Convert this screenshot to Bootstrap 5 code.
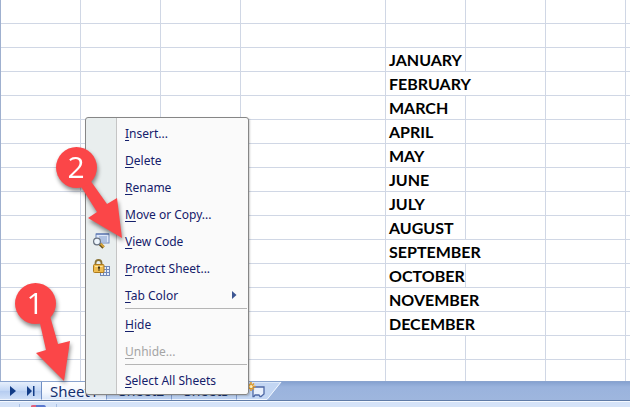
<!DOCTYPE html>
<html lang="en">
<head>
<meta charset="utf-8">
<meta name="viewport" content="width=device-width, initial-scale=1">
<title>Sheet tab menu</title>
<link rel="stylesheet" href="https://cdn.jsdelivr.net/npm/bootstrap@5.3.0/dist/css/bootstrap.min.css">
<style>
  body { background: #fff; font-family: "Noto Sans", sans-serif; }
  .sheet-area { min-height: 0; }
  .cells { table-layout: fixed; width: 100%; border-collapse: separate; border-spacing: 0; border-left: 1px solid #9fb0cf; font: 700 16px/22px Lato, sans-serif; color: #000; }
  .cells td { height: 24px; padding: 1px 0 0 3px; border-right: 1px solid #d0d7e5; border-bottom: 1px solid #d0d7e5; white-space: nowrap; }
  .cells td:last-child { border-right: 0; }
  .cells .w-std { width: 80px; }
  .cells .w-wide { width: 145px; }
  .tab-strip { height: 20px; background: linear-gradient(#86a2d0, #9ab3dd 5px, #9eb6de); border-top: 1px solid #8aa4cf; border-bottom: 1px solid #5f7ba6; }
  .nav-box { width: 42px; padding-left: 4px; background: linear-gradient(#e6effc, #c3d7f5 50%, #b4cbf0 51%, #cfdff7); border-right: 1px solid #6f8fc4; border-bottom: 1px solid #f0f5fd; }
  .nav-box button { width: 18px; }
  .sheet-tab { height: 18px; padding-left: 12px; width: 65px; text-align: left; font-size: 14px; line-height: 18px; color: #15306f; background: linear-gradient(#dce8fa, #b9cff0); border-right: 1px solid #7f9acb !important; border-bottom: 1px solid #f0f5fd !important; }
  .sheet-tab.current { padding-left: 8px; font-size: 15px; background: linear-gradient(#fff, #f4f8fe 60%, #dbe7f9); }
  .status-row { height: 6px; padding-left: 19px; background: #d5e3f8; border-top: 1px solid #f5f9ff; }
  .status-row .cell-box { width: 38px; border: 1px solid #a9c0e4; border-width: 0 1px; margin-top: 2px; }
  .ctx { left: 85px; top: 117px; width: 164px; padding: 1px 0; background: linear-gradient(90deg, #e9eeee 30px, #c5c5c5 30px, #c5c5c5 31px, #fafafa 31px); border: 1px solid #868686; border-radius: 3px; box-shadow: 1px 1px 2px #0003; }
  .ctx button { height: 27px; font-size: 12px; line-height: 24px; color: #15206b; }
  .ctx .label { padding-top: 2px; }
  .ctx button:disabled { color: #a5a5a5; }
  .ctx u { text-underline-offset: 2px; }
  .ctx .slot { width: 39px; padding-left: 7px; }
  .ctx hr { margin: 0 1px 1px 39px; border-top: 1px solid #b5b5b5; opacity: 1; }
  .callout { filter: drop-shadow(1px 3px 2px #0007); pointer-events: none; overflow: visible; }
  .callout text { font: 30px "Open Sans", sans-serif; fill: #fff; }
  .one { left: 15px; top: 283px; }
  .two { left: 56px; top: 147px; }
</style>
<script src="https://cdn.jsdelivr.net/npm/bootstrap@5.3.0/dist/js/bootstrap.bundle.min.js"></script>
</head>
<body>
<div class="vh-100 d-flex flex-column position-relative overflow-hidden">
  <main class="sheet-area flex-grow-1 overflow-hidden">
    <table class="cells">
      <colgroup><col class="w-std"><col class="w-std"><col class="w-std"><col class="w-wide"><col class="w-std"><col class="w-std"><col class="w-std"><col></colgroup>
      <tbody>
      <tr><td></td><td></td><td></td><td></td><td></td><td></td><td></td><td></td></tr>
      <tr><td></td><td></td><td></td><td></td><td></td><td></td><td></td><td></td></tr>
      <tr><td></td><td></td><td></td><td></td><td>JANUARY</td><td></td><td></td><td></td></tr>
      <tr><td></td><td></td><td></td><td></td><td colspan="2">FEBRUARY</td><td></td><td></td></tr>
      <tr><td></td><td></td><td></td><td></td><td>MARCH</td><td></td><td></td><td></td></tr>
      <tr><td></td><td></td><td></td><td></td><td>APRIL</td><td></td><td></td><td></td></tr>
      <tr><td></td><td></td><td></td><td></td><td>MAY</td><td></td><td></td><td></td></tr>
      <tr><td></td><td></td><td></td><td></td><td>JUNE</td><td></td><td></td><td></td></tr>
      <tr><td></td><td></td><td></td><td></td><td>JULY</td><td></td><td></td><td></td></tr>
      <tr><td></td><td></td><td></td><td></td><td>AUGUST</td><td></td><td></td><td></td></tr>
      <tr><td></td><td></td><td></td><td></td><td colspan="2">SEPTEMBER</td><td></td><td></td></tr>
      <tr><td></td><td></td><td></td><td></td><td>OCTOBER</td><td></td><td></td><td></td></tr>
      <tr><td></td><td></td><td></td><td></td><td colspan="2">NOVEMBER</td><td></td><td></td></tr>
      <tr><td></td><td></td><td></td><td></td><td colspan="2">DECEMBER</td><td></td><td></td></tr>
      <tr><td></td><td></td><td></td><td></td><td></td><td></td><td></td><td></td></tr>
      <tr><td></td><td></td><td></td><td></td><td></td><td></td><td></td><td></td></tr>
      </tbody>
    </table>
  </main>

  <nav class="tab-strip d-flex flex-shrink-0" aria-label="Sheets">
    <div class="nav-box d-flex">
      <button type="button" class="border-0 bg-transparent p-0 d-flex align-items-center justify-content-center" aria-label="Next sheet"><svg width="6" height="10" viewBox="0 0 6 10"><path d="M0 0L6 5L0 10Z" fill="#123c87"/></svg></button>
      <button type="button" class="border-0 bg-transparent p-0 d-flex align-items-center justify-content-center" aria-label="Last sheet"><svg width="8" height="10" viewBox="0 0 8 10"><path d="M0 0L5 5L0 10ZM6 0H7.500V10H6Z" fill="#123c87"/></svg></button>
    </div>
    <button type="button" class="sheet-tab current border-0 py-0 pe-0">Sheet1</button>
    <button type="button" class="sheet-tab border-0 py-0 pe-0">Sheet2</button>
    <button type="button" class="sheet-tab border-0 py-0 pe-0">Sheet3</button>
    <button type="button" class="border-0 bg-transparent p-0 d-flex" aria-label="Insert worksheet">
      <svg width="46" height="18" viewBox="0 0 46 18">
        <path d="M0 0H44.500L30 17.500H0Z" fill="#c3d6f3"/><path d="M0 0H44L30 17.500H0" fill="none" stroke="#f2f7ff"/>
        <path d="M16 5H27V12L24 14.500H23L22 13H18L17 14.500H16Z" fill="#e9f0fc" stroke="#4d67a5" stroke-width="1.300"/>
        <path d="M14 0V9M9.500 4.500H18.500M11 1.500L17 7.500M17 1.500L11 7.500" stroke="#e39a27" stroke-width="1.500"/><circle cx="14" cy="4.500" r="1.600" fill="#fff3c4"/>
      </svg>
    </button>
  </nav>
  <footer class="status-row d-flex flex-shrink-0">
    <div class="cell-box d-flex justify-content-center"><svg width="15" height="4" viewBox="0 0 15 4"><path d="M0 4V2Q0 1 2 1H6V4Z" fill="#e0607c"/><path d="M5 1H13Q15 1 15 4H5Z" fill="#5a78cf"/></svg></div>
  </footer>

  <div class="ctx position-absolute" role="menu" aria-label="Sheet tab">
    <button type="button" role="menuitem" class="w-100 border-0 bg-transparent p-0 d-flex align-items-center"><span class="slot"></span><span class="label"><u>I</u>nsert...</span></button>
    <button type="button" role="menuitem" class="w-100 border-0 bg-transparent p-0 d-flex align-items-center"><span class="slot"></span><span class="label"><u>D</u>elete</span></button>
    <button type="button" role="menuitem" class="w-100 border-0 bg-transparent p-0 d-flex align-items-center"><span class="slot"></span><span class="label"><u>R</u>ename</span></button>
    <button type="button" role="menuitem" class="w-100 border-0 bg-transparent p-0 d-flex align-items-center"><span class="slot"></span><span class="label"><u>M</u>ove or Copy...</span></button>
    <button type="button" role="menuitem" class="w-100 border-0 bg-transparent p-0 d-flex align-items-center"><span class="slot d-flex"><svg width="17" height="16" viewBox="0 0 17 16">
      <rect x="3" y="1" width="13" height="9" fill="#dfe9fa" stroke="#7089bd"/><path d="M3 1H16" stroke="#4c69a8"/><path d="M6 4H14M6 6H14M8 8H14" stroke="#7f9acb"/>
      <path d="M7 11L10.500 14.500" stroke="#6b5420" stroke-width="3.200"/><path d="M7.500 10.500L11 14" stroke="#d8a63a" stroke-width="1.800"/>
      <circle cx="4" cy="8.500" r="3.400" fill="#eef6fd" stroke="#67717f" stroke-width="1.200"/></svg></span><span class="label"><u>V</u>iew Code</span></button>
    <button type="button" role="menuitem" class="w-100 border-0 bg-transparent p-0 d-flex align-items-center"><span class="slot d-flex"><svg width="17" height="17" viewBox="0 0 17 17">
      <rect x="7.500" y="7.500" width="9" height="9" fill="#e7effb" stroke="#7188b8"/><path d="M7.500 10.500H16.500M7.500 13.500H16.500M10.500 7.500V16.500M13.500 7.500V16.500" stroke="#7188b8"/>
      <path d="M2.500 6.500V4Q2.500 1 5.500 1T8.500 4V6.500" fill="none" stroke="#8b7436" stroke-width="1.800"/><rect x=".5" y="5.500" width="10.500" height="8" rx="1" fill="#eebc50" stroke="#ad7a1c"/><path d="M2 7.500H9.500" stroke="#fbe4a1"/><path d="M5 7.500H7V9.500H6.500V12H5.500V9.500H5Z" fill="#42300e"/></svg></span><span class="label"><u>P</u>rotect Sheet...</span></button>
    <button type="button" role="menuitem" aria-haspopup="true" class="w-100 border-0 bg-transparent p-0 d-flex align-items-center"><span class="slot"></span><span class="label"><u>T</u>ab Color</span><svg class="ms-auto me-2" width="10" height="8" viewBox="0 0 10 8"><path d="M2 0L6.500 4L2 8Z" fill="#3d5692"/></svg></button>
    <hr>
    <button type="button" role="menuitem" class="w-100 border-0 bg-transparent p-0 d-flex align-items-center"><span class="slot"></span><span class="label"><u>H</u>ide</span></button>
    <button type="button" role="menuitem" disabled class="w-100 border-0 bg-transparent p-0 d-flex align-items-center"><span class="slot"></span><span class="label"><u>U</u>nhide...</span></button>
    <hr>
    <button type="button" role="menuitem" class="w-100 border-0 bg-transparent p-0 d-flex align-items-center"><span class="slot"></span><span class="label"><u>S</u>elect All Sheets</span></button>
  </div>

  <svg class="callout one position-absolute" width="56" height="99" viewBox="0 0 56 99">
    <path d="M24 36L35 33L43 61L55 58L49 98L21 70L31 67Z" fill="#fb4648"/><circle cx="20.500" cy="20.500" r="20.500" fill="#fb4648"/><text x="20" y="31" text-anchor="middle">1</text>
  </svg>
  <svg class="callout two position-absolute" width="67" height="92" viewBox="0 0 67 92">
    <path d="M24 38L34 33L51 57L61 51L66 91L32 71L41 65Z" fill="#fb4648"/><circle cx="20.500" cy="20.500" r="20.500" fill="#fb4648"/><text x="20" y="31" text-anchor="middle">2</text>
  </svg>
</div>
</body>
</html>
